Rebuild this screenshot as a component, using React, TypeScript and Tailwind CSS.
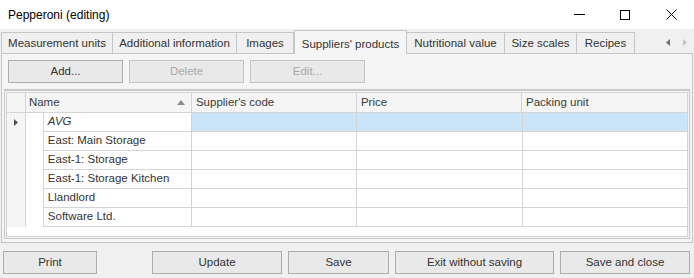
import React from "react";

const tabs = [
    { label: "Measurement units", w: "w-[112px]" },
    { label: "Additional information", w: "w-[125px]" },
    { label: "Images", w: "w-[58px]" },
    { label: "Suppliers' products", w: "w-[113px]", active: true },
    { label: "Nutritional value", w: "w-[99px]" },
    { label: "Size scales", w: "w-[73px]" },
    { label: "Recipes", w: "w-[59px]" },
];

const rows = [
    { name: "AVG", italic: true, current: true },
    { name: "East: Main Storage" },
    { name: "East-1: Storage" },
    { name: "East-1: Storage Kitchen" },
    { name: "Llandlord" },
    { name: "Software Ltd." },
];

function Btn({ label, w, disabled = false }: { label: string; w: string; disabled?: boolean }) {
    return (
        <div
            className={`${w} h-[23px] flex items-center justify-center border bg-[#e9e9e9] ${
                disabled ? "border-[#c4c4c4] text-[#a8a8a8]" : "border-[#adadad] text-[#333333]"
            }`}
        >
            {label}
        </div>
    );
}

export default function App() {
    return (
        <div
            className="w-[694px] h-[278px] bg-[#f0f0f0] text-[11.5px] text-[#333333] overflow-hidden flex flex-col"
            style={{ fontFamily: '"Liberation Sans", Arial, sans-serif' }}
        >
            {/* title bar */}
            <div className="h-[29px] bg-white flex items-center shrink-0">
                <div className="pl-[8px] text-[12px] text-black flex-1">Pepperoni (editing)</div>
                <div className="flex items-center h-full">
                    <div className="w-[46px] h-full flex items-center justify-center">
                        <div className="w-[11px] h-[1px] bg-black" />
                    </div>
                    <div className="w-[46px] h-full flex items-center justify-center">
                        <div className="w-[10px] h-[10px] border border-black" />
                    </div>
                    <div className="w-[46px] h-full flex items-center justify-center">
                        <svg width="11" height="11" viewBox="0 0 11 11">
                            <path d="M0.5 0.5 L10.5 10.5 M10.5 0.5 L0.5 10.5" stroke="black" strokeWidth="1" />
                        </svg>
                    </div>
                </div>
            </div>

            {/* tab strip */}
            <div className="h-[24px] flex items-end pl-[1px] shrink-0 relative">
                {tabs.map((t) =>
                    t.active ? (
                        <div
                            key={t.label}
                            className={`${t.w} h-[24px] -mb-[1px] z-10 bg-[#f5f5f5] border border-b-0 border-[#c6c6c6] flex items-start justify-center pt-[5px]`}
                        >
                            {t.label}
                        </div>
                    ) : (
                        <div
                            key={t.label}
                            className={`${t.w} h-[21px] bg-[#f0f0f0] border border-b-0 border-[#c6c6c6] -ml-[1px] first:ml-0 flex items-center justify-center pt-[1px]`}
                        >
                            {t.label}
                        </div>
                    )
                )}
                <div className="flex-1 flex items-center justify-end gap-[13px] pr-[7px] h-[21px]">
                    <svg width="4" height="7" viewBox="0 0 4 7">
                        <path d="M4 0 L0 3.5 L4 7 Z" fill="#707070" />
                    </svg>
                    <svg width="4" height="7" viewBox="0 0 4 7">
                        <path d="M0 0 L4 3.5 L0 7 Z" fill="#c4c4c4" />
                    </svg>
                </div>
            </div>

            {/* tab page */}
            <div className="mx-[1px] h-[190px] border border-[#c6c6c6] bg-[#f5f5f5] flex flex-col shrink-0">
                <div className="flex gap-[6px] pl-[6px] pt-[6px] h-[34px]">
                    <Btn label="Add..." w="w-[115px]" />
                    <Btn label="Delete" w="w-[115px]" disabled />
                    <Btn label="Edit..." w="w-[115px]" disabled />
                </div>

                {/* grid */}
                <div className="mx-[2px] mt-[1px] h-[150px] border-t-[2px] border-[#c8c8c8] flex flex-col">
                    <div className="flex-1 border-x border-b border-[#c8c8c8] p-[1px]">
                        <div className="h-full border border-[#d4d4d4] bg-white flex flex-col">
                            {/* header */}
                            <div className="flex h-[20px] bg-[#f5f5f5] border-b border-[#d4d4d4] text-[#3a3a3a]">
                                <div className="w-[19px] border-r border-[#d4d4d4]" />
                                <div className="w-[167px] border-r border-[#d4d4d4] flex items-center pl-[3px] pr-[6px]">
                                    <span className="flex-1">Name</span>
                                    <svg width="8" height="5" viewBox="0 0 8 5">
                                        <path d="M0 5 L4 0 L8 5 Z" fill="#8a8a8a" />
                                    </svg>
                                </div>
                                <div className="w-[166px] border-r border-[#d4d4d4] flex items-center pl-[4px]">Supplier's code</div>
                                <div className="w-[166px] border-r border-[#d4d4d4] flex items-center pl-[4px]">Price</div>
                                <div className="w-[166px] flex items-center pl-[4px]">Packing unit</div>
                            </div>
                            {rows.map((r) => (
                                <div key={r.name} className="flex h-[19px]">
                                    <div className="w-[19px] bg-[#f5f5f5] border-r border-[#d4d4d4] flex items-center justify-center">
                                        {r.current && (
                                            <svg width="4" height="7" viewBox="0 0 4 7">
                                                <path d="M0 0 L4 3.5 L0 7 Z" fill="#505050" />
                                            </svg>
                                        )}
                                    </div>
                                    <div className="w-[18px] border-r border-[#d4d4d4]" />
                                    <div className={`w-[149px] border-r border-b border-[#d4d4d4] flex items-center pl-[4px] ${r.italic ? "italic" : ""}`}>
                                        {r.name}
                                    </div>
                                    <div className={`w-[166px] border-r border-b border-[#d4d4d4] ${r.current ? "bg-[#cce4f7]" : ""}`} />
                                    <div className={`w-[166px] border-r border-b border-[#d4d4d4] ${r.current ? "bg-[#cce4f7]" : ""}`} />
                                    <div className={`w-[165px] border-b border-[#d4d4d4] ${r.current ? "bg-[#cce4f7]" : ""}`} />
                                </div>
                            ))}
                        </div>
                    </div>
                </div>
            </div>

            {/* bottom buttons */}
            <div className="flex pl-[3px] pt-[8px]">
                <Btn label="Print" w="w-[94px]" />
                <div className="w-[55px]" />
                <Btn label="Update" w="w-[130px]" />
                <div className="w-[6px]" />
                <Btn label="Save" w="w-[101px]" />
                <div className="w-[6px]" />
                <Btn label="Exit without saving" w="w-[159px]" />
                <div className="w-[6px]" />
                <Btn label="Save and close" w="w-[130px]" />
            </div>
        </div>
    );
}
